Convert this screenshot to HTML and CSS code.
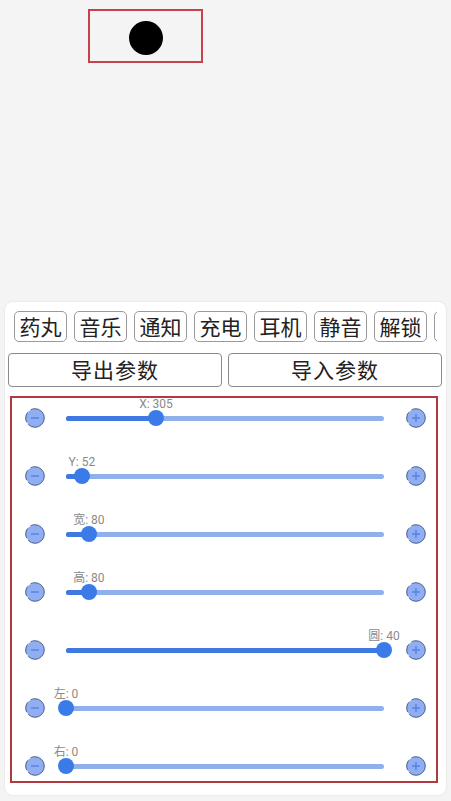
FILE: index.html
```html
<!DOCTYPE html>
<html lang="zh">
<head>
<meta charset="utf-8">
<link rel="stylesheet" href="styles.css">
</head>
<body>
<div class="preview">
  <div class="frame"><div class="dot"></div></div>
</div>
<div class="panel">
  <div class="tabs">
    <div class="tab">药丸</div>
    <div class="tab">音乐</div>
    <div class="tab">通知</div>
    <div class="tab">充电</div>
    <div class="tab">耳机</div>
    <div class="tab">静音</div>
    <div class="tab">解锁</div>
    <div class="tab"></div>
  </div>
  <div class="actions">
    <div class="btn">导出参数</div>
    <div class="btn">导入参数</div>
  </div>
  <div class="sliders">
    <div class="row">
      <svg class="step" viewBox="0 0 20 20"><circle cx="10" cy="10" r="9.3" class="c"/><path d="M6 10h8" class="g"/></svg>
      <div class="track"><div class="fill" style="width:28.3%"></div><div class="thumb" style="left:28.3%"><span class="tip">X: 305</span></div></div>
      <svg class="step" viewBox="0 0 20 20"><circle cx="10" cy="10" r="9.3" class="c"/><path d="M6 10h8M10 6v8" class="g"/></svg>
    </div>
    <div class="row">
      <svg class="step" viewBox="0 0 20 20"><circle cx="10" cy="10" r="9.3" class="c"/><path d="M6 10h8" class="g"/></svg>
      <div class="track"><div class="fill" style="width:5%"></div><div class="thumb" style="left:5%"><span class="tip">Y: 52</span></div></div>
      <svg class="step" viewBox="0 0 20 20"><circle cx="10" cy="10" r="9.3" class="c"/><path d="M6 10h8M10 6v8" class="g"/></svg>
    </div>
    <div class="row">
      <svg class="step" viewBox="0 0 20 20"><circle cx="10" cy="10" r="9.3" class="c"/><path d="M6 10h8" class="g"/></svg>
      <div class="track"><div class="fill" style="width:7.2%"></div><div class="thumb" style="left:7.2%"><span class="tip">宽: 80</span></div></div>
      <svg class="step" viewBox="0 0 20 20"><circle cx="10" cy="10" r="9.3" class="c"/><path d="M6 10h8M10 6v8" class="g"/></svg>
    </div>
    <div class="row">
      <svg class="step" viewBox="0 0 20 20"><circle cx="10" cy="10" r="9.3" class="c"/><path d="M6 10h8" class="g"/></svg>
      <div class="track"><div class="fill" style="width:7.2%"></div><div class="thumb" style="left:7.2%"><span class="tip">高: 80</span></div></div>
      <svg class="step" viewBox="0 0 20 20"><circle cx="10" cy="10" r="9.3" class="c"/><path d="M6 10h8M10 6v8" class="g"/></svg>
    </div>
    <div class="row">
      <svg class="step" viewBox="0 0 20 20"><circle cx="10" cy="10" r="9.3" class="c"/><path d="M6 10h8" class="g"/></svg>
      <div class="track"><div class="fill" style="width:100%"></div><div class="thumb" style="left:100%"><span class="tip">圆: 40</span></div></div>
      <svg class="step" viewBox="0 0 20 20"><circle cx="10" cy="10" r="9.3" class="c"/><path d="M6 10h8M10 6v8" class="g"/></svg>
    </div>
    <div class="row">
      <svg class="step" viewBox="0 0 20 20"><circle cx="10" cy="10" r="9.3" class="c"/><path d="M6 10h8" class="g"/></svg>
      <div class="track"><div class="fill" style="width:0%"></div><div class="thumb" style="left:0%"><span class="tip">左: 0</span></div></div>
      <svg class="step" viewBox="0 0 20 20"><circle cx="10" cy="10" r="9.3" class="c"/><path d="M6 10h8M10 6v8" class="g"/></svg>
    </div>
    <div class="row">
      <svg class="step" viewBox="0 0 20 20"><circle cx="10" cy="10" r="9.3" class="c"/><path d="M6 10h8" class="g"/></svg>
      <div class="track"><div class="fill" style="width:0%"></div><div class="thumb" style="left:0%"><span class="tip">右: 0</span></div></div>
      <svg class="step" viewBox="0 0 20 20"><circle cx="10" cy="10" r="9.3" class="c"/><path d="M6 10h8M10 6v8" class="g"/></svg>
    </div>
  </div>
</div>
</body>
</html>
```
FILE: styles.css
```css
* { box-sizing: border-box; }
html, body { margin: 0; padding: 0; }
body {
  width: 451px;
  height: 801px;
  overflow: hidden;
  background: #f4f4f4;
  font-family: "Noto Sans CJK SC", "Noto Sans", sans-serif;
  color: #222;
}
.preview {
  height: 302px;
  padding: 9px 0 0 88px;
}
.frame {
  width: 115px;
  height: 54px;
  border: 2px solid #c8414c;
  display: flex;
  align-items: center;
  justify-content: center;
  padding-top: 3px;
}
.dot {
  width: 34px;
  height: 34px;
  border-radius: 50%;
  background: #000;
}
.panel {
  margin: 0 5px;
  height: 493px;
  background: #fff;
  border-radius: 8px;
  box-shadow: 0 0 2px rgba(0,0,0,0.12);
  overflow: hidden;
}
.tabs {
  display: flex;
  gap: 7px;
  padding: 9px 0 0 9px;
  margin-right: 9px;
  height: 40px;
  overflow: hidden;
}
.tab {
  flex: 0 0 53px;
  height: 31px;
  border: 1px solid #9a9a9a;
  border-radius: 5px;
  font-size: 21px;
  line-height: 28px;
  text-align: center;
  white-space: nowrap;
  overflow: hidden;
}
.actions {
  display: flex;
  gap: 6px;
  padding: 11px 4px 0 3px;
  height: 45px;
}
.btn {
  flex: 1;
  height: 34px;
  border: 1px solid #8a8a8a;
  border-radius: 4px;
  font-size: 21px;
  line-height: 31px;
  text-align: center;
  letter-spacing: 1px;
}
.sliders {
  margin: 9px 0 0 5px;
  width: 428px;
  height: 387px;
  border: 2px solid #b23a3f;
  padding: 0 10px 0 13px;
  display: flex;
  flex-direction: column;
  gap: 18px;
  overflow: hidden;
}
.row {
  flex: 0 0 40px;
  display: flex;
  align-items: center;
}
.step {
  width: 20px;
  height: 20px;
  flex: 0 0 20px;
}
.step .c {
  fill: #90aff3;
  stroke: #40507a;
  stroke-width: 0.9;
  stroke-dasharray: 22 3 10 4;
}
.step .g {
  stroke: #5a7fe2;
  stroke-width: 1.4;
  fill: none;
}
.track {
  position: relative;
  width: 318px;
  height: 5px;
  margin: 0 22px 0 21px;
  border-radius: 3px;
  background: #8fb0ea;
}
.fill {
  height: 5px;
  border-radius: 3px;
  background: #3f78e0;
}
.thumb {
  position: absolute;
  top: 50%;
  width: 16px;
  height: 16px;
  margin: -8px 0 0 -8px;
  border-radius: 50%;
  background: #3a7be8;
}
.tip {
  position: absolute;
  left: 50%;
  bottom: 15px;
  transform: translateX(-50%);
  font-family: Roboto, "Noto Sans CJK SC", sans-serif;
  font-size: 12px;
  line-height: 13px;
  color: #8a8a8a;
  white-space: nowrap;
}
```
